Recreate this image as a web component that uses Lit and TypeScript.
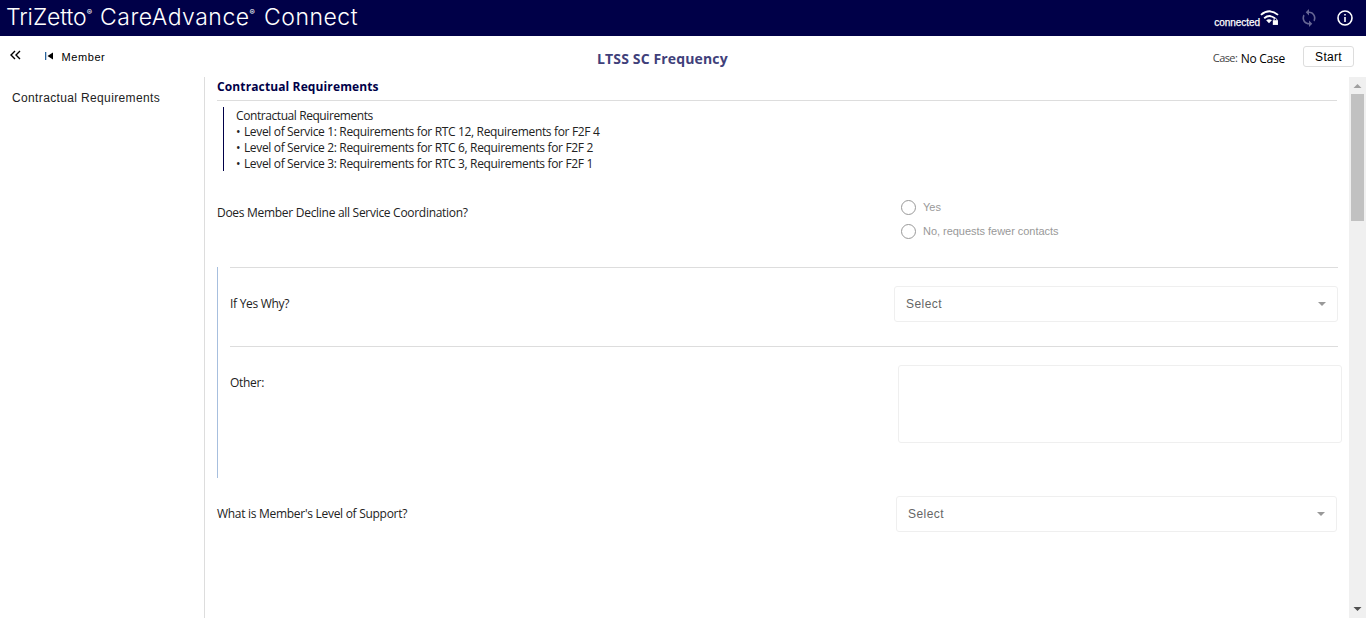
import { LitElement, html, css } from "lit";
import { customElement, property } from "lit/decorators.js";

@customElement("select-box")
class SelectBox extends LitElement {
  @property() label = "Select";

  static styles = css`
    :host {
      display: flex;
      align-items: center;
      justify-content: space-between;
      box-sizing: border-box;
      height: 36px;
      padding: 0 11px;
      border: 1px solid #efefef;
      border-radius: 3px;
      font: 12px/16px "Liberation Sans", Arial, sans-serif;
      letter-spacing: 0.44px;
      color: #666;
    }
    .caret {
      display: block;
      width: 8px;
      height: 4px;
    }
  `;

  render() {
    return html`<span>${this.label}</span>
      <svg class="caret" viewBox="0 0 8 4"><path d="M0 0h8L4 4z" fill="#999" /></svg>`;
  }
}

@customElement("app-root")
class AppRoot extends LitElement {
  private levels = [
    "Level of Service 1: Requirements for RTC 12, Requirements for F2F 4",
    "Level of Service 2: Requirements for RTC 6, Requirements for F2F 2",
    "Level of Service 3: Requirements for RTC 3, Requirements for F2F 1",
  ];

  static styles = css`
    :host {
      display: flex;
      flex-direction: column;
      height: 618px;
      overflow: hidden;
      background: #fff;
      color: #222;
      font: 12px/16px "Open Sans", "Noto Sans", sans-serif;
      white-space: nowrap;
    }
    svg {
      display: block;
      flex: none;
    }
    .bar {
      display: flex;
      flex: none;
      height: 36px;
      box-sizing: border-box;
      padding: 0 12px 0 6px;
      background: #000048;
      color: #fff;
      justify-content: space-between;
    }
    .brand {
      display: flex;
      font: 300 23px/34px Inter, sans-serif;
    }
    .brand span {
      box-sizing: border-box;
    }
    .w1 {
      width: 94px;
      letter-spacing: -0.1px;
    }
    .w2 {
      width: 164px;
      letter-spacing: 0.5px;
    }
    .w3 {
      letter-spacing: 0.5px;
    }
    .brand sup {
      font-size: 8px;
      font-weight: 500;
      line-height: 0;
      vertical-align: 10px;
      letter-spacing: 0;
    }
    .status {
      display: flex;
      align-items: center;
    }
    .connected {
      font: 10px/12px "Liberation Sans", Arial, sans-serif;
      padding-top: 9px;
      letter-spacing: -0.05px;
      -webkit-text-stroke: 0.25px #fff;
    }
    .wifi {
      margin-right: 2px;
    }
    .sync {
      margin: 0 20px 0 21px;
    }
    .sub {
      display: grid;
      grid-template-columns: 595px 1fr auto;
      flex: none;
      height: 41px;
      box-sizing: border-box;
      padding: 0 12px 0 10px;
      font-family: "Liberation Sans", Arial, sans-serif;
      color: #000;
    }
    .nav {
      display: flex;
      align-items: center;
      height: 41px;
      letter-spacing: 0.58px;
      font-size: 11px;
    }
    .prev {
      margin: 0 8.500px 2px 24px;
    }
    .chev {
      margin-bottom: 3px;
    }
    .title {
      margin-left: -8px;
      font: 700 14px/46px "Open Sans", sans-serif;
      color: #40407a;
      letter-spacing: 0.14px;
    }
    .case {
      display: flex;
      align-items: center;
      height: 44px;
      font: 12px/16px "Open Sans", sans-serif;
    }
    .caselabel {
      font-size: 11px;
      color: #444;
      letter-spacing: -0.6px;
      margin-right: 3.500px;
    }
    .casename {
      letter-spacing: -0.25px;
      padding-top: 1px;
    }
    .start {
      box-sizing: border-box;
      width: 51px;
      height: 21px;
      margin: 0 0 4px 18px;
      padding: 1px 0 0;
      border: 1px solid #ddd;
      border-radius: 3px;
      background: #fff;
      color: #000;
      font: 12px/18px "Liberation Sans", Arial, sans-serif;
      letter-spacing: 0.3px;
    }
    .body {
      display: flex;
      flex: 1;
      min-height: 0;
    }
    .side {
      flex: none;
      width: 180px;
      padding: 13px 12px;
      border-right: 1px solid #ddd;
      font-family: "Liberation Sans", Arial, sans-serif;
      letter-spacing: 0.36px;
    }
    .main {
      flex: 1;
      min-width: 0;
      padding-left: 12px;
    }
    .heading {
      margin: 0;
      width: 1120px;
      height: 24px;
      box-sizing: border-box;
      border-bottom: 1px solid #ddd;
      font: 700 12px/19px "Open Sans", sans-serif;
      letter-spacing: 0.12px;
      color: #000048;
    }
    .note {
      margin: 6px 0 0 6px;
      padding-left: 12px;
      border-left: 1px solid #000048;
      height: 64px;
      letter-spacing: -0.34px;
    }
    .note p {
      margin: 0;
      padding-top: 1px;
      height: 15px;
      line-height: 16px;
    }
    .note p:first-child {
      letter-spacing: -0.42px;
    }
    .bullet {
      letter-spacing: 0.6px;
    }
    .row {
      display: flex;
      justify-content: space-between;
      box-sizing: border-box;
    }
    .q {
      letter-spacing: -0.29px;
    }
    .r1 {
      height: 96px;
      padding-top: 28px;
      width: 1120px;
    }
    .r1 .q {
      padding-top: 6px;
    }
    .radios {
      display: flex;
      flex-direction: column;
      width: 436px;
      font: 11px/16px "Liberation Sans", Arial, sans-serif;
      letter-spacing: -0.03px;
      color: #999;
    }
    .radio {
      display: flex;
      align-items: center;
      height: 16px;
      margin-bottom: 8px;
    }
    .ring {
      box-sizing: border-box;
      width: 15px;
      height: 15px;
      margin-right: 7px;
      border: 1px solid #999;
      border-radius: 50%;
    }
    .nested {
      width: 1125px;
      height: 211px;
      box-sizing: border-box;
      padding-left: 12px;
      border-left: 1px solid #a7bfde;
    }
    .line {
      width: 1108px;
      height: 1px;
      background: #ddd;
    }
    .r2 {
      width: 1108px;
      height: 78px;
      padding-top: 18px;
    }
    .r3 {
      width: 1112px;
      padding-top: 18px;
    }
    .q.mid {
      padding-top: 10px;
    }
    .wide {
      width: 444px;
    }
    .area {
      box-sizing: border-box;
      width: 444px;
      height: 78px;
      border: 1px solid #efefef;
      border-radius: 3px;
    }
    .r4 {
      width: 1120px;
      padding-top: 18px;
    }
    .last {
      width: 441px;
    }
    .scroll {
      display: flex;
      flex-direction: column;
      align-items: center;
      flex: none;
      width: 17px;
      background: #f0f0f0;
    }
    .thumb {
      width: 13px;
      height: 127px;
      background: #c1c1c1;
      margin-bottom: auto;
    }
  `;

  render() {
    return html`
      <header class="bar">
        <div class="brand">
          <span class="w1">TriZetto<sup>®</sup></span>
          <span class="w2">CareAdvance<sup>®</sup></span>
          <span class="w3">Connect</span>
        </div>
        <div class="status">
          <span class="connected">connected</span>
          <svg class="wifi" width="19" height="18" viewBox="0 0 20 18" fill="none" stroke="#fff" stroke-width="2">
            <path d="M1 5.7Q10 -1.7 19 5.7M4.4 9.2Q10 4.8 15.6 9.2" />
            <path d="M6.5 11.4Q9.5 9 12.5 11.4L9.5 14.6z" fill="#fff" stroke="none" />
            <path d="M13.500 11.3h5.4v5h-5.400z" fill="#fff" stroke="none" />
            <path d="M14.7 11.5v-1.2q1.5-2 3 0v1.2" stroke-width="1" />
          </svg>
          <svg class="sync" width="14" height="18" viewBox="4 1 16 22" fill="#666694">
            <path d="M12 4V1L8 5l4 4V6c3.310 0 6 2.690 6 6 0 1.010-.25 1.970-.7 2.800l1.460 1.460C19.540 15.030 20 13.570 20 12c0-4.420-3.580-8-8-8zm0 14c-3.310 0-6-2.690-6-6 0-1.010.25-1.970.7-2.800L5.240 7.740C4.460 8.970 4 10.430 4 12c0 4.420 3.580 8 8 8v3l4-4-4-4v3z" />
          </svg>
          <svg width="18" height="18" viewBox="0 0 18 18">
            <circle cx="9" cy="9" r="7" fill="none" stroke="#fff" stroke-width="1.6" />
            <path d="M8.2 5h1.6v1.6H8.2zM8.2 8h1.6v5H8.2z" fill="#fff" />
          </svg>
        </div>
      </header>
      <div class="sub">
        <div class="nav">
          <svg class="chev" width="11" height="10" viewBox="0 0 11 10" fill="none" stroke="#000" stroke-width="1.4">
            <path d="M5 1L1 5l4 4M10 1L6 5l4 4" />
          </svg>
          <svg class="prev" width="8" height="8" viewBox="0 0 8 8">
            <path d="M0 0h1.3v8H0z" fill="#28639c" />
            <path d="M8 .5v7L2.500 4z" fill="#000" />
          </svg>
          <span>Member</span>
        </div>
        <div class="title">LTSS SC Frequency</div>
        <div class="case">
          <span class="caselabel">Case:</span><span class="casename">No Case</span>
          <button class="start">Start</button>
        </div>
      </div>
      <div class="body">
        <nav class="side">Contractual Requirements</nav>
        <main class="main">
          <h2 class="heading"><span>Contractual Requirements</span></h2>
          <div class="note">
            <p><span>Contractual Requirements</span></p>
            ${this.levels.map((l) => html`<p><span class="bullet">•</span> ${l}</p>`)}
          </div>
          <div class="row r1">
            <span class="q">Does Member Decline all Service Coordination?</span>
            <div class="radios">
              <label class="radio"><span class="ring"></span>Yes</label>
              <label class="radio"><span class="ring"></span>No, requests fewer contacts</label>
            </div>
          </div>
          <section class="nested">
            <div class="line"></div>
            <div class="row r2">
              <span class="q mid">If Yes Why?</span>
              <select-box class="wide"></select-box>
            </div>
            <div class="line"></div>
            <div class="row r3">
              <span class="q mid">Other:</span>
              <div class="area"></div>
            </div>
          </section>
          <div class="row r4">
            <span class="q mid">What is Member's Level of Support?</span>
            <select-box class="last"></select-box>
          </div>
        </main>
        <div class="scroll">
          <svg width="17" height="17" viewBox="0 0 17 17"><path d="M8.5 7l4 4h-8z" fill="#a0a0a0" /></svg>
          <div class="thumb"></div>
          <svg width="17" height="17" viewBox="0 0 17 17"><path d="M4.500 6h8l-4 4z" fill="#505050" /></svg>
        </div>
      </div>
    `;
  }
}
